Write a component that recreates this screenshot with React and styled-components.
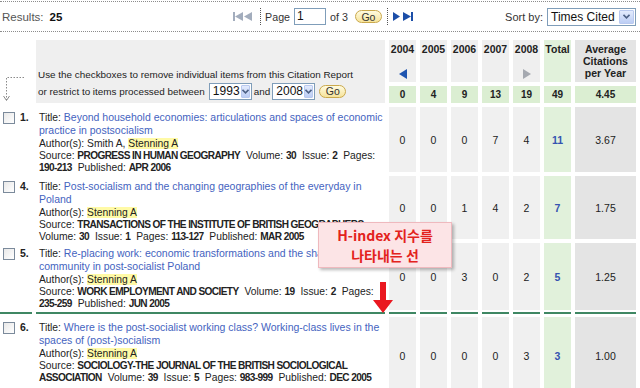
import React from 'react';
import styled, { createGlobalStyle, css } from 'styled-components';

const Global = createGlobalStyle`
  html, body { margin: 0; padding: 0; background: #fff; }
  body { font-family: "Liberation Sans", Arial, sans-serif; font-size: 10.3px; color: #222; }
`;

const Page = styled.div`
  position: relative;
  width: 640px;
  height: 388px;
  overflow: hidden;
`;

const TopBar = styled.div`
  margin-top: 1px;
  height: 29px;
  border-top: 1px dotted #8c8c8c;
  border-bottom: 1px dotted #8c8c8c;
  display: grid;
  grid-template-columns: 1fr auto 1fr;
  align-items: center;
  padding: 0 4px 0 2px;
`;

const Results = styled.div`
  color: #555;
  font-size: 11.5px;
  b { color: #111; margin-left: 6px; font-size: 11.5px; }
`;

const Nav = styled.div`
  display: flex;
  align-items: center;
  color: #333;
  font-size: 10.7px;
  margin-left: 8px;
`;

const NavIcon = styled.svg`
  display: block;
  margin-left: ${p => p.$ml || 0}px;
`;

const DotSep = styled.span`
  display: block;
  width: 0;
  height: 17px;
  border-left: 1px dotted #555;
  margin: 0 ${p => p.$mr || 4}px 0 ${p => p.$ml || 8}px;
`;

const PageInput = styled.div`
  width: 28px;
  height: 15px;
  border: 1px solid #7f9db9;
  margin: 0 4px 0 4px;
  padding-left: 2px;
  font-size: 12px;
  line-height: 15px;
  color: #111;
  background: #fff;
`;

const GoButton = styled.span`
  display: inline-flex;
  align-items: center;
  justify-content: center;
  width: ${p => p.$w || 27}px;
  height: 13px;
  border-radius: 8px;
  border: 1px solid #caa94c;
  background: linear-gradient(#fffbe0, #f6e39a);
  font-size: 10.5px;
  color: #333;
  margin-left: ${p => p.$ml || 0}px;
  box-sizing: border-box;
`;

const Sort = styled.div`
  justify-self: end;
  display: flex;
  align-items: center;
  color: #333;
  font-size: 11px;
  gap: 4px;
`;

const Select = styled.div`
  display: flex;
  align-items: stretch;
  justify-content: space-between;
  width: ${p => p.$w}px;
  height: ${p => p.$h}px;
  border: 1px solid #7f9db9;
  background: #fff;
  box-sizing: border-box;
  font-size: 12px;
  color: #111;
  margin: ${p => p.$m || '0'};
`;

const SelectText = styled.span`
  padding-left: 3px;
  display: flex;
  align-items: center;
`;

const SelectBtn = styled.span`
  width: 13px;
  margin: 1px;
  border: 1px solid #b9c9ef;
  border-radius: 1px;
  background: linear-gradient(#e3ebfd, #bccdf4);
  display: flex;
  align-items: center;
  justify-content: center;
`;

const Chevron = () => (
  <svg width="7" height="5" viewBox="0 0 7 5">
    <polyline points="0.5,0.8 3.5,3.8 6.5,0.8" fill="none" stroke="#4d6185" strokeWidth="1.6" />
  </svg>
);

const Table = styled.div`
  display: grid;
  grid-template-columns: 32px 349px repeat(6, 27px) 61px;
  grid-template-rows: 42px 17px 65px 63px 67px 80px;
  column-gap: 4px;
  row-gap: 4px;
  margin-top: 8px;
`;

const CornerCell = styled.div`
  grid-row: span 2;
  display: flex;
  align-items: flex-start;
  padding: 36px 0 0 3px;
`;

const IntroCell = styled.div`
  grid-row: span 2;
  background: #efefef;
  display: flex;
  flex-direction: column;
  justify-content: flex-end;
  padding: 0 0 3px 2px;
  color: #222;
  font-size: 9.9px;
  line-height: 13px;
`;

const IntroLine = styled.div`
  display: flex;
  align-items: center;
  white-space: nowrap;
  margin-top: ${p => p.$mt || 0}px;
`;

const HeadCell = styled.div`
  background: ${p => (p.$kind === 'total' ? '#e1f1db' : p.$kind === 'avg' ? '#e4e4e4' : '#efefef')};
  display: flex;
  flex-direction: column;
  align-items: center;
  padding-top: 3px;
  font-weight: bold;
  font-size: 10.5px;
  line-height: 12px;
  color: #222;
  text-align: center;
  box-sizing: border-box;
`;

const HeadArrow = styled.svg`
  margin-top: 14px;
  display: block;
`;

const SumCell = styled.div`
  background: #dbeed2;
  display: flex;
  align-items: center;
  justify-content: center;
  font-weight: bold;
  font-size: 10px;
  color: #222;
`;

const lineStyle = css`
  ${p => p.$hline && css`
    position: relative;
    margin-top: 3px;
    &::before {
      content: '';
      position: absolute;
      left: 0;
      right: 0;
      top: -5px;
      height: 2px;
      background: #3f8763;
    }
  `}
`;

const NumCell = styled.div`
  display: flex;
  align-items: flex-start;
  padding: 4px 0 0 3px;
  ${lineStyle}
`;

const Check = styled.span`
  width: 10px;
  height: 10px;
  border: 1px solid #7b8a9b;
  background: linear-gradient(135deg, #e8e8e8, #ffffff);
  margin-top: 1px;
`;

const RowNo = styled.span`
  font-weight: bold;
  font-size: 10.5px;
  margin-left: 5px;
  line-height: 13px;
`;

const TextCell = styled.div`
  padding: 4px 0 0 3px;
  font-size: 10.3px;
  line-height: 12px;
  color: #222;
  b { font-weight: bold; font-size: 10.1px; letter-spacing: -0.6px; }
  ${lineStyle}
`;

const TitleLine = styled.div`
  line-height: 13px;
  margin-bottom: 1px;
`;

const TitleLink = styled.span`
  color: #4463c0;
  font-size: 10.5px;
`;

const Hl = styled.span`
  background: #fffaa6;
`;

const Field = styled.span`
  margin-right: 3px;
`;

const ValCell = styled.div`
  background: ${p => (p.$kind === 'total' ? '#e1f1db' : p.$kind === 'avg' ? '#e4e4e4' : '#f0f0f0')};
  display: flex;
  align-items: center;
  justify-content: center;
  font-size: 10.5px;
  color: ${p => (p.$kind === 'total' ? '#3553b0' : '#222')};
  font-weight: ${p => (p.$kind === 'total' ? 'bold' : 'normal')};
  ${lineStyle}
`;

const Callout = styled.div`
  position: absolute;
  left: 318px;
  top: 222px;
  width: 134px;
  height: 46px;
  box-sizing: border-box;
  background: #fce4e6;
  border: 1px solid #efb9be;
  box-shadow: 2px 2px 3px rgba(0, 0, 0, 0.28);
  display: flex;
  flex-direction: column;
  align-items: center;
  justify-content: center;
  color: #e3221c;
  font-family: "Noto Sans CJK KR", "Noto Sans", sans-serif;
  font-weight: bold;
  font-size: 14px;
  line-height: 20px;
`;

const RedArrow = styled.svg`
  position: absolute;
  left: 373px;
  top: 282px;
`;

const rows = [
  {
    n: 1,
    title: 'Beyond household economies: articulations and spaces of economic practice in postsocialism',
    authors: [{ name: 'Smith A' }, { name: 'Stenning A', hl: true }],
    source: 'PROGRESS IN HUMAN GEOGRAPHY',
    vol: '30', issue: '2', pages: '190-213', pub: 'APR 2006',
    counts: [0, 0, 0, 7, 4], total: 11, avg: '3.67',
  },
  {
    n: 4,
    title: 'Post-socialism and the changing geographies of the everyday in Poland',
    authors: [{ name: 'Stenning A', hl: true }],
    source: 'TRANSACTIONS OF THE INSTITUTE OF BRITISH GEOGRAPHERS',
    vol: '30', issue: '1', pages: '113-127', pub: 'MAR 2005',
    counts: [0, 0, 1, 4, 2], total: 7, avg: '1.75',
  },
  {
    n: 5,
    title: 'Re-placing work: economic transformations and the shape of a community in post-socialist Poland',
    authors: [{ name: 'Stenning A', hl: true }],
    source: 'WORK EMPLOYMENT AND SOCIETY',
    vol: '19', issue: '2', pages: '235-259', pub: 'JUN 2005',
    counts: [0, 0, 3, 0, 2], total: 5, avg: '1.25',
  },
  {
    n: 6,
    title: 'Where is the post-socialist working class? Working-class lives in the spaces of (post-)socialism',
    authors: [{ name: 'Stenning A', hl: true }],
    source: 'SOCIOLOGY-THE JOURNAL OF THE BRITISH SOCIOLOGICAL ASSOCIATION',
    vol: '39', issue: '5', pages: '983-999', pub: 'DEC 2005',
    counts: [0, 0, 0, 0, 3], total: 3, avg: '1.00',
    hline: true,
  },
];

const years = ['2004', '2005', '2006', '2007', '2008'];
const sums = ['0', '4', '9', '13', '19'];

export default function App() {
  return (
    <Page>
      <Global />
      <TopBar>
        <Results>Results:<b>25</b></Results>
        <Nav>
          <NavIcon width="10" height="9" viewBox="0 0 10 9">
            <rect x="0" y="0" width="2" height="9" fill="#a3adbd" />
            <polygon points="10,0 2,4.5 10,9" fill="#a3adbd" />
          </NavIcon>
          <NavIcon $ml={1} width="8" height="9" viewBox="0 0 8 9">
            <polygon points="8,0 0,4.5 8,9" fill="#a3adbd" />
          </NavIcon>
          <DotSep $ml={8} $mr={4} />
          <span>Page</span>
          <PageInput>1</PageInput>
          <span>of 3</span>
          <GoButton $ml={7}>Go</GoButton>
          <DotSep $ml={5} $mr={5} />
          <NavIcon width="7" height="9" viewBox="0 0 7 9">
            <polygon points="0,0 7,4.5 0,9" fill="#1c4ea8" />
          </NavIcon>
          <NavIcon $ml={3} width="10" height="9" viewBox="0 0 10 9">
            <polygon points="0,0 8,4.5 0,9" fill="#1c4ea8" />
            <rect x="8" y="0" width="2" height="9" fill="#1c4ea8" />
          </NavIcon>
        </Nav>
        <Sort>
          <span>Sort by:</span>
          <Select $w={89} $h={18}>
            <SelectText>Times Cited</SelectText>
            <SelectBtn><Chevron /></SelectBtn>
          </Select>
        </Sort>
      </TopBar>

      <Table>
        <CornerCell>
          <svg width="22" height="26" viewBox="0 0 22 26">
            <polyline points="21,1.5 3.5,1.5 3.5,24" fill="none" stroke="#8a8a8a" strokeWidth="1" strokeDasharray="1.5 1.5" />
            <polyline points="0.5,20 3.5,24.5 6.5,20" fill="none" stroke="#8a8a8a" strokeWidth="1" />
          </svg>
        </CornerCell>
        <IntroCell>
          <IntroLine>Use the checkboxes to remove individual items from this Citation Report</IntroLine>
          <IntroLine $mt={2}>
            or restrict to items processed between
            <Select $w={43} $h={17} $m="0 2px 0 4px">
              <SelectText>1993</SelectText>
              <SelectBtn><Chevron /></SelectBtn>
            </Select>
            and
            <Select $w={43} $h={17} $m="0 4px 0 2px">
              <SelectText>2008</SelectText>
              <SelectBtn><Chevron /></SelectBtn>
            </Select>
            <GoButton $w={27}>Go</GoButton>
          </IntroLine>
        </IntroCell>
        {years.map((y, i) => (
          <HeadCell key={y}>
            {y}
            {i === 0 && (
              <HeadArrow width="8" height="10" viewBox="0 0 8 10">
                <polygon points="8,0 0,5 8,10" fill="#1f55b0" />
              </HeadArrow>
            )}
            {i === 4 && (
              <HeadArrow width="8" height="10" viewBox="0 0 8 10">
                <polygon points="0,0 8,5 0,10" fill="#a5a9b0" />
              </HeadArrow>
            )}
          </HeadCell>
        ))}
        <HeadCell $kind="total">Total</HeadCell>
        <HeadCell $kind="avg">Average<br />Citations<br />per Year</HeadCell>

        {sums.map((s, i) => <SumCell key={i}>{s}</SumCell>)}
        <SumCell>49</SumCell>
        <SumCell>4.45</SumCell>

        {rows.map(r => (
          <React.Fragment key={r.n}>
            <NumCell $hline={r.hline}>
              <Check />
              <RowNo>{r.n}.</RowNo>
            </NumCell>
            <TextCell $hline={r.hline}>
              <TitleLine>Title: <TitleLink>{r.title}</TitleLink></TitleLine>
              <div>
                Author(s):{' '}
                {r.authors.map((a, i) => (
                  <React.Fragment key={a.name}>
                    {i > 0 && ', '}
                    {a.hl ? <Hl>{a.name}</Hl> : a.name}
                  </React.Fragment>
                ))}
              </div>
              <div>
                <Field>Source: <b>{r.source}</b></Field>{' '}
                <Field>Volume: <b>{r.vol}</b></Field>{' '}
                <Field>Issue: <b>{r.issue}</b></Field>{' '}
                <Field>Pages: <b>{r.pages}</b></Field>{' '}
                <Field>Published: <b>{r.pub}</b></Field>
              </div>
            </TextCell>
            {r.counts.map((c, i) => (
              <ValCell key={i} $hline={r.hline}>{c}</ValCell>
            ))}
            <ValCell $kind="total" $hline={r.hline}>{r.total}</ValCell>
            <ValCell $kind="avg" $hline={r.hline}>{r.avg}</ValCell>
          </React.Fragment>
        ))}
      </Table>

      <Callout>
        <div>H-index 지수를</div>
        <div>나타내는 선</div>
      </Callout>
      <RedArrow width="20" height="31" viewBox="0 0 20 31">
        <polygon points="7,0 13,0 13,18 20,18 10,31 0,18 7,18" fill="#ea1820" />
      </RedArrow>
    </Page>
  );
}
